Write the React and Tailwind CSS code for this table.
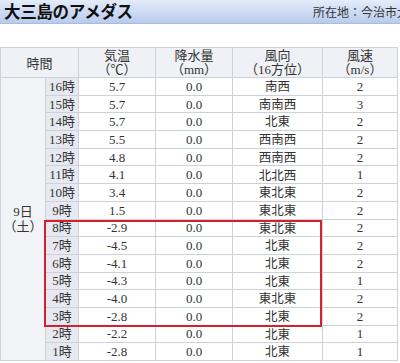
import React from 'react';

const rows = [
    { hour: '16時', temp: '5.7', rain: '0.0', dir: '南西', speed: '2' },
    { hour: '15時', temp: '5.7', rain: '0.0', dir: '南南西', speed: '3' },
    { hour: '14時', temp: '5.7', rain: '0.0', dir: '北東', speed: '2' },
    { hour: '13時', temp: '5.5', rain: '0.0', dir: '西南西', speed: '2' },
    { hour: '12時', temp: '4.8', rain: '0.0', dir: '西南西', speed: '2' },
    { hour: '11時', temp: '4.1', rain: '0.0', dir: '北北西', speed: '1' },
    { hour: '10時', temp: '3.4', rain: '0.0', dir: '東北東', speed: '2' },
    { hour: '9時', temp: '1.5', rain: '0.0', dir: '東北東', speed: '2' },
    { hour: '8時', temp: '-2.9', rain: '0.0', dir: '東北東', speed: '2' },
    { hour: '7時', temp: '-4.5', rain: '0.0', dir: '北東', speed: '2' },
    { hour: '6時', temp: '-4.1', rain: '0.0', dir: '北東', speed: '2' },
    { hour: '5時', temp: '-4.3', rain: '0.0', dir: '北東', speed: '1' },
    { hour: '4時', temp: '-4.0', rain: '0.0', dir: '東北東', speed: '2' },
    { hour: '3時', temp: '-2.8', rain: '0.0', dir: '北東', speed: '2' },
    { hour: '2時', temp: '-2.2', rain: '0.0', dir: '北東', speed: '1' },
    { hour: '1時', temp: '-2.8', rain: '0.0', dir: '北東', speed: '1' },
];

const headers = [
    { top: '気温', unit: '（℃）' },
    { top: '降水量', unit: '（mm）' },
    { top: '風向', unit: '（16方位）' },
    { top: '風速', unit: '（m/s）' },
];

const cell = "border border-[#cdd1da] text-center p-0 leading-none";

export default function App() {
    return (
        <div className="w-[400px] h-[363px] overflow-hidden bg-white text-[#333] font-['Liberation_Serif','Noto_Sans_CJK_JP',serif]">
            {/* タイトルバー */}
            <div className="h-[24px] flex items-center bg-gradient-to-b from-[#e4ecfa] to-[#b9cbec] border-b border-[#a8bce3]">
                <h1 className="pl-[4px] text-[16.5px] font-bold tracking-[-0.3px] text-[#111] font-['Noto_Sans_CJK_JP',sans-serif]">
                    大三島のアメダス
                </h1>
                <div className="ml-auto w-[87px] overflow-hidden whitespace-nowrap text-[12px] pt-[1px] font-['Noto_Sans_CJK_JP',sans-serif]">
                    所在地：今治市大三島町
                </div>
            </div>

            {/* テーブル */}
            <div className="relative mt-[23px]">
                <table className="border-collapse table-fixed w-[397px] text-[13px]">
                    <colgroup>
                        <col className="w-[45px]" />
                        <col className="w-[33px]" />
                        <col className="w-[77px]" />
                        <col className="w-[77px]" />
                        <col className="w-[90px]" />
                        <col className="w-[75px]" />
                    </colgroup>
                    <thead>
                        <tr className="h-[30px] bg-[#eff1f6]">
                            <th colSpan={2} className={`${cell} font-normal font-['Noto_Sans_CJK_JP',sans-serif]`}>時間</th>
                            {headers.map((h) => (
                                <th key={h.top} className={`${cell} font-normal`}>
                                    <div className="font-['Noto_Sans_CJK_JP',sans-serif] text-[13px] leading-[14px]">{h.top}</div>
                                    <div className="text-[13px] leading-[15px]">{h.unit}</div>
                                </th>
                            ))}
                        </tr>
                    </thead>
                    <tbody>
                        {rows.map((r, i) => (
                            <tr key={r.hour} className="h-[17.7px]">
                                {i === 0 && (
                                    <td rowSpan={16} className={`${cell} bg-[#f2f3f6] align-middle`}>
                                        <div className="leading-[15px]">9日</div>
                                        <div className="leading-[15px]">（土）</div>
                                    </td>
                                )}
                                <td className={`${cell} bg-[#e6e9f0]`}>{r.hour}</td>
                                <td className={cell}>{r.temp}</td>
                                <td className={cell}>{r.rain}</td>
                                <td className={`${cell} font-['Noto_Sans_CJK_JP',sans-serif] text-[12.5px]`}>{r.dir}</td>
                                <td className={cell}>{r.speed}</td>
                            </tr>
                        ))}
                    </tbody>
                </table>
                {/* 強調枠 */}
                <div className="absolute left-[44px] top-[173px] w-[278px] h-[107px] border-2 border-[#d4202f] pointer-events-none" />
            </div>
        </div>
    );
}
